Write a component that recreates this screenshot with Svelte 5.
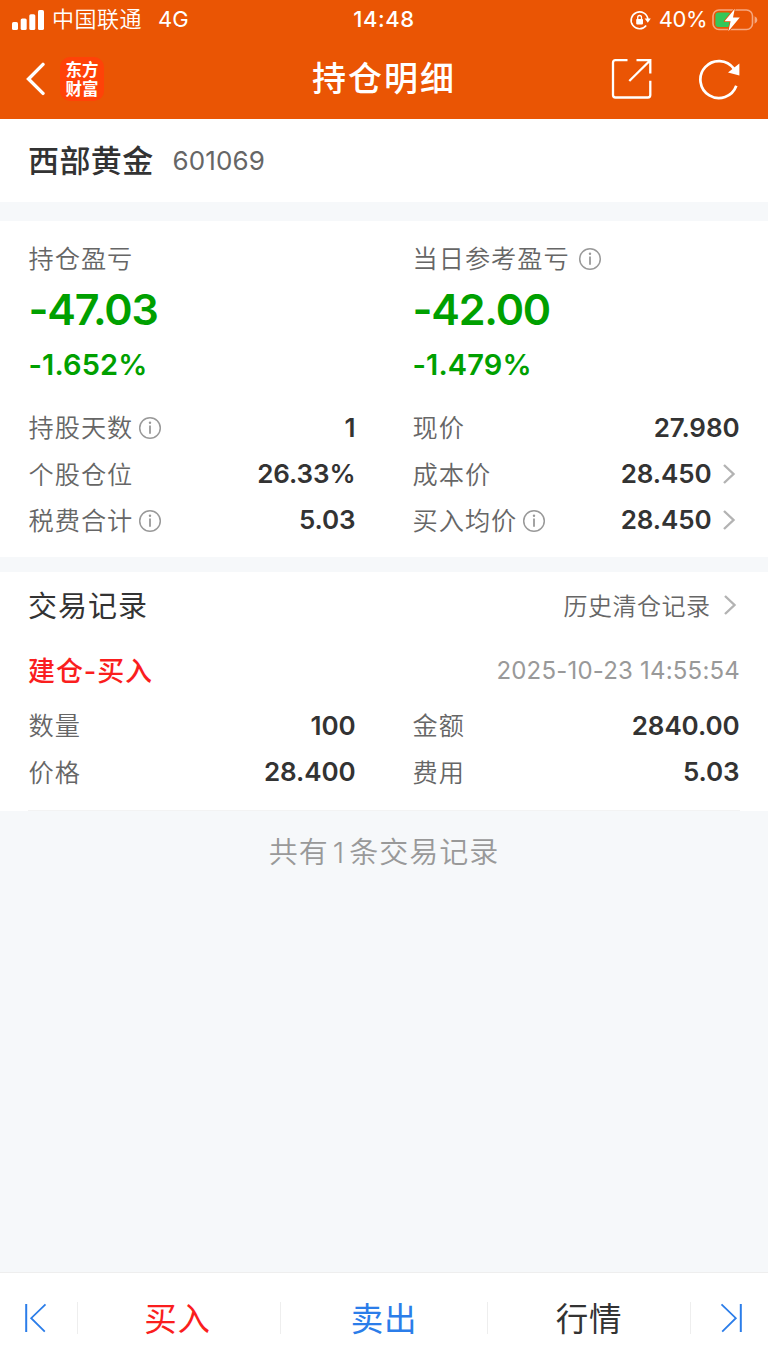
<script lang="ts">
    type Row = { label: string; value: string; info?: boolean; arrow?: boolean };

    const summary = [
        { label: "持仓盈亏", amount: "-47.03", percent: "-1.652%", info: false },
        { label: "当日参考盈亏", amount: "-42.00", percent: "-1.479%", info: true },
    ];

    const details: Row[] = [
        { label: "持股天数", value: "1", info: true },
        { label: "现价", value: "27.980" },
        { label: "个股仓位", value: "26.33%" },
        { label: "成本价", value: "28.450", arrow: true },
        { label: "税费合计", value: "5.03", info: true },
        { label: "买入均价", value: "28.450", info: true, arrow: true },
    ];

    const record: Row[] = [
        { label: "数量", value: "100" },
        { label: "金额", value: "2840.00" },
        { label: "价格", value: "28.400" },
        { label: "费用", value: "5.03" },
    ];
</script>

{#snippet infoIcon()}
    <svg class="info" width="24" height="24" viewBox="0 0 24 24">
        <circle cx="12" cy="12" r="10.3" fill="none" stroke="#999" stroke-width="1.5" />
        <circle cx="12" cy="6.7" r="1.2" fill="#999" />
        <path d="M12 9.6V17.8" stroke="#999" stroke-width="1.8" />
    </svg>
{/snippet}

{#snippet arrowIcon()}
    <svg class="arrow" width="14" height="22" viewBox="0 0 14 22">
        <path d="M2 2L11.5 11L2 20" fill="none" stroke="#b3b3b3" stroke-width="2.4" />
    </svg>
{/snippet}

{#snippet rows(items: Row[])}
    <div class="columns">
        {#each items as item}
            <div class="row">
                <span class="label">{item.label}</span>
                {#if item.info}{@render infoIcon()}{/if}
                <span class="value">{item.value}</span>
                {#if item.arrow}{@render arrowIcon()}{/if}
            </div>
        {/each}
    </div>
{/snippet}

<div class="app">
    <header>
        <div class="status">
            <div class="carrier">
                <svg width="32" height="20" viewBox="0 0 32 20" fill="#fff">
                    <rect x="0" y="12" width="6" height="8" rx="1.6" />
                    <rect x="8.7" y="8.5" width="6" height="11.5" rx="1.6" />
                    <rect x="17.3" y="4.2" width="6" height="15.8" rx="1.6" />
                    <rect x="26" y="0" width="6" height="20" rx="1.6" />
                </svg>
                <span class="operator">中国联通</span>
                <span class="network">4G</span>
            </div>
            <div class="time">14:48</div>
            <div class="power">
                <svg width="22" height="20" viewBox="0 0 22 20">
                    <path
                        d="M18.9 9.6A8.4 8.4 0 1 0 17.2 15.4"
                        fill="none"
                        stroke="#fff"
                        stroke-width="1.6"
                    />
                    <path d="M15.6 8.6H21.8L18.8 12.8Z" fill="#fff" />
                    <rect x="7.2" y="9" width="6.8" height="5.4" rx="0.8" fill="#fff" />
                    <path
                        d="M8.7 9.4V7.4A1.9 1.9 0 0 1 12.5 7.4V9.4"
                        fill="none"
                        stroke="#fff"
                        stroke-width="1.3"
                    />
                </svg>
                <span class="charge">40%</span>
                <svg width="46" height="24" viewBox="0 0 46 24">
                    <rect
                        x="1"
                        y="2"
                        width="39.5"
                        height="19.5"
                        rx="6"
                        fill="none"
                        stroke="#f6a77f"
                        stroke-width="1.6"
                    />
                    <path d="M42.6 8.2Q45.4 9.4 45.4 12T42.6 15.8Z" fill="#f6a77f" />
                    <rect x="3.4" y="4.6" width="15.5" height="14.4" rx="3" fill="#34c759" />
                    <path
                        d="M22.8 0.8L12.6 13.2H18.6L16.4 23.2L27.8 9.6H21Z"
                        fill="#fff"
                        stroke="#ea5504"
                        stroke-width="1.6"
                        stroke-linejoin="round"
                        paint-order="stroke"
                    />
                </svg>
            </div>
        </div>
        <div class="nav">
            <div class="nav-left">
                <svg width="20" height="34" viewBox="0 0 20 34">
                    <path
                        d="M18 2.4L3.5 17L18 31.4"
                        fill="none"
                        stroke="#fff"
                        stroke-width="3.4"
                        stroke-linecap="round"
                    />
                </svg>
                <div class="logo"><span>东方</span><span>财富</span></div>
            </div>
            <h1>持仓明细</h1>
            <div class="nav-right">
                <svg width="42" height="42" viewBox="0 0 42 42">
                    <path
                        d="M16.5 2.2H4.5Q2 2.2 2 4.7V37Q2 39.5 4.5 39.5H36.8Q39.3 39.5 39.3 37V22.8M25.5 2.2H39.3V15.5M39.3 2.2L18.3 23"
                        fill="none"
                        stroke="#fff"
                        stroke-width="2.3"
                    />
                </svg>
                <svg width="44" height="44" viewBox="0 0 44 44">
                    <path
                        d="M36.8 11.6A18.5 18.5 0 1 0 39.3 28.8"
                        fill="none"
                        stroke="#fff"
                        stroke-width="2.7"
                    />
                    <path d="M42.4 6.6V18.6L31 15.4Z" fill="#fff" />
                </svg>
            </div>
        </div>
    </header>

    <section class="stock">
        <h2>西部黄金</h2>
        <span class="code">601069</span>
    </section>

    <section class="position">
        <div class="columns">
            {#each summary as item}
                <div class="profit">
                    <div class="profit-title">
                        <span class="label">{item.label}</span>
                        {#if item.info}{@render infoIcon()}{/if}
                    </div>
                    <div class="amount">{item.amount}</div>
                    <div class="percent">{item.percent}</div>
                </div>
            {/each}
        </div>
        {@render rows(details)}
    </section>

    <section class="records">
        <div class="records-head">
            <h3>交易记录</h3>
            <span class="history">历史清仓记录</span>
            {@render arrowIcon()}
        </div>
        <div class="record-title">
            <strong>建仓-买入</strong>
            <time>2025-10-23 14:55:54</time>
        </div>
        {@render rows(record)}
        <div class="rule"></div>
    </section>

    <p class="total">共有<span>1</span>条交易记录</p>

    <footer>
        <button class="step" aria-label="上一个">
            <svg width="24" height="30" viewBox="0 0 24 30">
                <path d="M2.2 1V29" stroke="#2b7de9" stroke-width="2" />
                <path d="M21.5 1.4L7.2 15.2L20.8 28.6" fill="none" stroke="#2b7de9" stroke-width="1.8" />
            </svg>
        </button>
        <button class="tab buy">买入</button>
        <button class="tab sell">卖出</button>
        <button class="tab quote">行情</button>
        <button class="step next" aria-label="下一个">
            <svg width="24" height="30" viewBox="0 0 24 30">
                <path d="M21.8 1V29" stroke="#2b7de9" stroke-width="2" />
                <path d="M2.5 1.4L16.8 15.2L3.2 28.6" fill="none" stroke="#2b7de9" stroke-width="1.8" />
            </svg>
        </button>
    </footer>
</div>

<style>
    :global(body) {
        margin: 0;
    }

    .app {
        display: flex;
        flex-direction: column;
        height: 1366px;
        background-color: #f6f8fa;
        color: #333;
        font-family: Inter, "Noto Sans CJK SC", sans-serif;
        white-space: nowrap;
    }

    svg {
        display: block;
        flex: none;
    }

    h1,
    h2,
    h3,
    p {
        margin: 0;
    }

    header {
        height: 119px;
        background-color: #ea5504;
        color: #fff;
    }

    .status,
    .nav {
        display: grid;
        grid-template-columns: 1fr auto 1fr;
        align-items: center;
    }

    .status {
        height: 39px;
        padding: 0 10px 0 12px;
        font-size: 22px;
        line-height: 39px;
    }

    .carrier,
    .power,
    .nav-left,
    .nav-right {
        display: flex;
        align-items: center;
    }

    .operator {
        margin-left: 8px;
        font-weight: 350;
        letter-spacing: 0.5px;
    }

    .network {
        margin-left: 16px;
    }

    .time {
        margin-right: 2px;
        font-weight: 500;
        letter-spacing: 0.6px;
    }

    .power {
        justify-content: flex-end;
    }

    .charge {
        margin: 0 5px 0 8px;
        letter-spacing: -0.5px;
    }

    .nav {
        height: 80px;
        padding: 0 27px 0 25px;
    }

    .logo {
        display: flex;
        flex-direction: column;
        align-items: center;
        justify-content: center;
        width: 44px;
        height: 44px;
        margin-left: 15px;
        border-radius: 10px;
        background-color: #ff4208;
        font-family: "Noto Sans CJK SC", sans-serif;
        font-weight: 700;
        font-size: 16.5px;
        line-height: 19px;
    }

    h1 {
        padding: 0 0 1px 2px;
        font-size: 34px;
        font-weight: 500;
        letter-spacing: 2px;
        line-height: 57px;
    }

    .nav-right {
        justify-content: flex-end;
        gap: 44px;
    }

    section {
        background-color: #fff;
    }

    .stock {
        display: flex;
        align-items: center;
        height: 83px;
        padding-left: 28px;
    }

    h2 {
        padding-bottom: 5px;
        font-size: 31px;
        font-weight: 500;
        letter-spacing: 0.4px;
    }

    .code {
        margin-left: 19px;
        padding-bottom: 1px;
        color: #666;
        font-size: 26px;
        letter-spacing: 0.1px;
    }

    .position {
        box-sizing: border-box;
        height: 336px;
        margin-top: 19px;
        padding-top: 18px;
    }

    .columns {
        display: grid;
        grid-template-columns: 327px 327px;
        column-gap: 57px;
        padding-left: 28.5px;
    }

    .profit {
        height: 166px;
    }

    .profit-title,
    .row {
        display: flex;
        align-items: center;
    }

    .profit-title {
        height: 39px;
    }

    .profit-title .info {
        margin-left: 8px;
    }

    .label {
        padding-bottom: 4px;
        color: #666;
        font-size: 25.2px;
        font-weight: 350;
        letter-spacing: 1px;
    }

    .info {
        margin-left: 5px;
    }

    .amount {
        color: #00a000;
        font-size: 43px;
        font-weight: 600;
        letter-spacing: -1.2px;
        line-height: 63px;
    }

    .percent {
        color: #00a000;
        font-size: 29px;
        font-weight: 600;
        letter-spacing: 0.1px;
        line-height: 47px;
    }

    .row {
        height: 46.4px;
    }

    .value {
        margin-left: auto;
        padding-bottom: 2px;
        font-size: 26px;
        font-weight: 600;
        letter-spacing: -0.1px;
    }

    .arrow {
        margin-bottom: 2px;
        margin-left: 10.5px;
        margin-right: 3.5px;
    }

    .records {
        height: 239px;
        margin-top: 15px;
    }

    .records-head,
    .record-title {
        display: flex;
        align-items: center;
        padding: 0 28px;
    }

    .records-head {
        height: 67px;
    }

    h3 {
        flex: 1;
        padding-bottom: 4px;
        font-size: 29px;
        font-weight: 400;
        letter-spacing: 1px;
    }

    .history {
        padding-bottom: 3px;
        color: #666;
        font-size: 24px;
        font-weight: 350;
        letter-spacing: 0.5px;
    }

    .records-head .arrow {
        margin-left: 12px;
    }

    .record-title {
        justify-content: space-between;
        height: 64px;
    }

    strong {
        padding-bottom: 4px;
        color: #fa1e1e;
        font-size: 27px;
        font-weight: 500;
        letter-spacing: 0.9px;
    }

    time {
        padding-bottom: 2px;
        color: #999;
        font-size: 24px;
        letter-spacing: 0.2px;
    }

    .rule {
        height: 1px;
        margin: 14px 28px 0;
        background-color: #f3f3f3;
    }

    .total {
        color: #999;
        font-size: 29px;
        font-weight: 350;
        letter-spacing: 1px;
        line-height: 84px;
        text-align: center;
    }

    .total span {
        margin: 0 4px;
    }

    footer {
        display: grid;
        grid-template-columns: 77px 203px 207px 203px 78px;
        align-items: center;
        height: 93px;
        margin-top: auto;
        border-top: 1px solid #eee;
        background-color: #fff;
    }

    button {
        display: flex;
        align-items: center;
        justify-content: center;
        height: 32px;
        margin-bottom: 3px;
        padding: 0;
        border: none;
        background: none;
        font: inherit;
    }

    .tab {
        padding-bottom: 3px;
        border-left: 1px solid #eee;
        font-size: 32.5px;
        letter-spacing: 0.8px;
    }

    .step {
        padding-right: 5px;
    }

    .next {
        padding: 0 0 0 2px;
        border-left: 1px solid #eee;
    }

    .buy {
        padding-right: 3px;
        color: #fa1e1e;
    }

    .sell {
        color: #2b7de9;
    }

    .quote {
        color: #333;
    }
</style>
